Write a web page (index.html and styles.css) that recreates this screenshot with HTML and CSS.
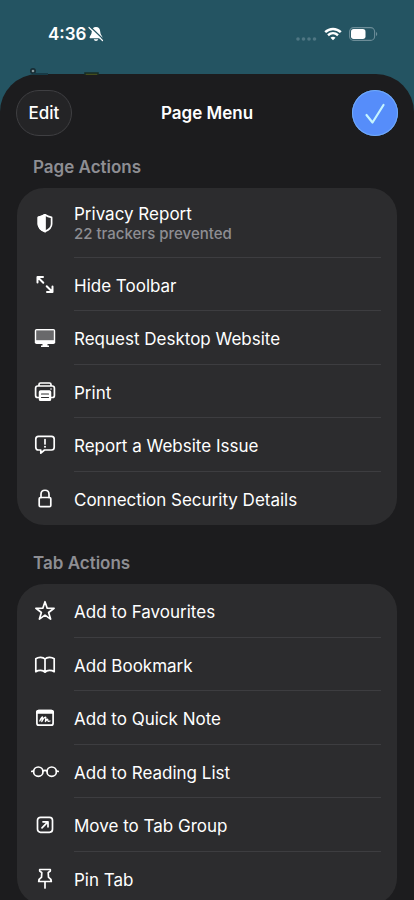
FILE: index.html
```html
<!DOCTYPE html>
<html lang="en-GB">
<head>
<meta charset="utf-8">
<meta name="viewport" content="width=device-width, initial-scale=1">
<title>Page Menu</title>
<link rel="stylesheet" href="styles.css">
</head>
<body>
<div class="screen">
  <div class="status">
    <div class="clock"><span>4:36</span>
      <svg width="16" height="16" viewBox="0 0 16 16"><path fill="#fff" d="M8 1C5.200 1 3.900 3 3.800 5.500C3.700 8.500 2 9.700 1.600 11.200C1.500 11.900 1.900 12.200 2.500 12.200H13.500C14.100 12.200 14.500 11.900 14.400 11.200C14 9.700 12.300 8.500 12.200 5.500C12.100 3 10.800 1 8 1ZM5.800 13.200C6.200 15.500 9.800 15.500 10.200 13.200Z"/><path d="M2.500 1L15.500 13.500" stroke="#245462" stroke-width="1.300"/><path d="M1 1.500L14.500 14.500" stroke="#fff" stroke-width="1.200" stroke-linecap="round"/></svg>
    </div>
    <div class="signals">
      <svg width="22" height="14" viewBox="0 0 22 14" fill="#4f7683"><circle cx="3" cy="12" r="1.800"/><circle cx="8.500" cy="12" r="1.800"/><circle cx="14" cy="12" r="1.800"/><circle cx="19.500" cy="12" r="1.800"/></svg>
      <svg width="18" height="14" viewBox="0 0 18 14" fill="none" stroke="#fff" stroke-width="2.500"><path d="M1.200 5.200C5.700 .9 12.300 .9 16.800 5.200M4 8.200C7 5.600 11 5.600 14 8.200"/><path d="M9 13.300L6.500 10.800C8 9.500 10 9.500 11.500 10.800Z" fill="#fff" stroke="none"/></svg>
      <svg width="29" height="14" viewBox="0 0 29 14"><rect x=".6" y=".6" width="25" height="12.800" rx="4" fill="none" stroke="#6c8d98" stroke-width="1.100"/><rect x="2" y="2" width="14.500" height="10" rx="2.700" fill="#fff"/><path d="M27 5V9C28.700 8.300 28.700 5.700 27 5Z" fill="#6c8d98"/></svg>
    </div>
  </div>
  <svg class="behind" width="72" height="8" viewBox="0 0 72 8"><circle cx="4" cy="4" r="3" fill="#172c34"/><circle cx="4" cy="4" r="1.300" fill="#87979b"/><path d="M4 7H19" stroke="#173a46" stroke-width="2"/><path d="M56 8V6H69V8" fill="#454d1c" stroke="#172c25" stroke-width="1.500"/></svg>
  <main class="sheet">
    <header class="bar">
      <button class="edit" type="button">Edit</button>
      <h1>Page Menu</h1>
      <button class="done" type="button" aria-label="Done"><svg width="46" height="46" viewBox="0 0 46 46" fill="none" stroke="#c5f4ff" stroke-width="2.200" stroke-linecap="round" stroke-linejoin="round"><path d="M14.500 25L20.500 32.500L31.500 15"/></svg></button>
    </header>

    <h2>Page Actions</h2>
    <ul class="card">
      <li class="tall"><button type="button">
        <svg class="icon" viewBox="0 0 28 28"><path d="M14 5.800C12 7.300 9.800 8.100 7.400 8.400V15C7.400 18.700 10.500 21 14 22.600C17.500 21 20.600 18.700 20.600 15V8.400C18.200 8.100 16 7.300 14 5.800Z"/><path class="solid" d="M14 5.800C12 7.300 9.800 8.100 7.400 8.400V15C7.400 18.700 10.500 21 14 22.600Z"/></svg>
        <span class="label">Privacy Report<small>22 trackers prevented</small></span></button></li>
      <li><button type="button">
        <svg class="icon" viewBox="0 0 28 28"><path d="M6.500 11.500V6H12M6.500 6L12.300 11.800M15.700 15.200L21.500 21M21.500 15.500V21H16" stroke-width="2"/></svg>
        <span class="label">Hide Toolbar</span></button></li>
      <li><button type="button">
        <svg class="icon" viewBox="0 0 28 28"><rect class="solid" x="3.800" y="5" width="20.400" height="15" rx="1.800" stroke="none"/><rect x="5.200" y="6.400" width="17.600" height="9.800" fill="#69696b" stroke="none"/><path class="solid" d="M11.500 19H16.500V21.500H18V23H10V21.500H11.500Z" stroke="none"/></svg>
        <span class="label">Request Desktop Website</span></button></li>
      <li><button type="button">
        <svg class="icon" viewBox="0 0 28 28"><path d="M8 8V6.500Q8 5 9.500 5H18.500Q20 5 20 6.500V8M8.500 19.500H6.500Q4.600 19.500 4.600 17.500V10.200Q4.600 8 6.800 8H21.200Q23.400 8 23.400 10.200V17.500Q23.400 19.500 21.500 19.500H19.500"/><rect class="solid" x="8.600" y="13" width="10.800" height="9.200" rx="1"/><path d="M10.500 16H17.500M10.500 19.500H17.500" stroke="#2c2c2e" stroke-width="1.200"/><circle class="solid" cx="20" cy="11" r=".8" stroke="none"/></svg>
        <span class="label">Print</span></button></li>
      <li><button type="button">
        <svg class="icon" viewBox="0 0 28 28"><path d="M7.500 5.400H20.500Q23.200 5.400 23.200 8.100V16.300Q23.200 19 20.500 19H13.500L9.800 22.200V19H7.500Q4.800 19 4.800 16.300V8.100Q4.800 5.400 7.500 5.400Z"/><path d="M14 8.500V13"/><circle class="solid" cx="14" cy="15.700" r="1" stroke="none"/></svg>
        <span class="label">Report a Website Issue</span></button></li>
      <li><button type="button">
        <svg class="icon" viewBox="0 0 28 28"><rect x="8.200" y="12.500" width="11.600" height="9.200" rx="1.300"/><path d="M10 12.500V9.300C10 3.900 18 3.900 18 9.300V12.500"/></svg>
        <span class="label">Connection Security Details</span></button></li>
    </ul>

    <h2>Tab Actions</h2>
    <ul class="card">
      <li><button type="button">
        <svg class="icon" viewBox="0 0 28 28"><path d="M14 4.700L16.200 11.200L23.100 11.300L17.600 15.500L19.600 22.100L14 18.100L8.400 22.100L10.400 15.500L4.900 11.300L11.800 11.200Z"/></svg>
        <span class="label">Add to Favourites</span></button></li>
      <li><button type="button">
        <svg class="icon" viewBox="0 0 28 28"><path d="M14 8C12 5.900 7.500 5.700 4.800 7.700V20.700C7.500 18.900 12 18.900 14 21.200C16 18.900 20.500 18.900 23.200 20.700V7.700C20.500 5.700 16 5.900 14 8V21.200"/></svg>
        <span class="label">Add Bookmark</span></button></li>
      <li><button type="button">
        <svg class="icon" viewBox="0 0 28 28"><rect x="5.900" y="6.500" width="16.200" height="14.700" rx="2"/><path class="solid" d="M5.900 9V8.200Q5.900 6.500 7.600 6.500H20.400Q22.100 6.500 22.100 8.200V9Z"/><path d="M8.800 17C10 14 11.800 11.800 11.600 13.700L10.800 17.500C12.500 14 15.300 11.500 14.800 14.300L14.400 17.500C15.800 15.300 17 14.500 16.800 16.200C16.800 17.700 18 17.500 19 17" stroke-width="1.300"/></svg>
        <span class="label">Add to Quick Note</span></button></li>
      <li><button type="button">
        <svg class="icon" viewBox="0 0 28 28"><circle cx="7.300" cy="13.700" r="4.700"/><circle cx="20.700" cy="13.700" r="4.700"/><path d="M.8 13.400L2.600 13M12 13C13.300 12.200 14.700 12.200 16 13M25.400 13L27.200 13.400"/></svg>
        <span class="label">Add to Reading List</span></button></li>
      <li><button type="button">
        <svg class="icon" viewBox="0 0 28 28"><rect x="6.500" y="6.300" width="15" height="15" rx="3"/><path d="M11 16.800L16.600 11.200M12 10.800H17V15.800"/></svg>
        <span class="label">Move to Tab Group</span></button></li>
      <li><button type="button">
        <svg class="icon" viewBox="0 0 28 28"><path d="M8.700 4.500H19.300V6L17.200 7.700L17.500 12.300C19.300 13.300 20.200 14.400 20.300 16.500H7.700C7.800 14.400 8.700 13.300 10.500 12.300L10.800 7.700L8.700 6ZM14 16.500V23"/></svg>
        <span class="label">Pin Tab</span></button></li>
    </ul>
  </main>
</div>
</body>
</html>
```
FILE: styles.css
```css
* { box-sizing: border-box; }

body {
  margin: 0;
  background: #245462;
  color: #fff;
  font-family: Inter, "Liberation Sans", sans-serif;
}

button {
  font: inherit;
  color: inherit;
  border: 0;
  padding: 0;
  cursor: pointer;
}

svg { display: block; flex: none; }

.screen {
  position: relative;
  display: flex;
  flex-direction: column;
  height: 100vh;
  overflow: hidden;
}

.status {
  flex: none;
  display: flex;
  justify-content: space-between;
  align-items: center;
  height: 74px;
  padding: 0 36px 7px 48px;
}

.clock {
  display: flex;
  align-items: center;
  gap: 2px;
  font-size: 17px;
  font-weight: 600;
}

.signals {
  display: flex;
  align-items: center;
  gap: 7px;
}

.behind {
  position: absolute;
  left: 29px;
  top: 67px;
}

.sheet {
  flex: 1;
  min-height: 0;
  padding: 16px;
  border-radius: 38px 38px 0 0;
  background: #1c1c1e;
  overflow-y: auto;
  scrollbar-width: none;
}

.bar {
  display: grid;
  grid-template-columns: 56px 1fr 56px;
  align-items: center;
  height: 46px;
}

.bar h1 {
  margin: 0;
  font-size: 17px;
  font-weight: 600;
  text-align: center;
}

.edit {
  height: 46px;
  border: 1px solid #3f3f42;
  border-radius: 23px;
  background: #242426;
  font-size: 17px;
  font-weight: 500;
}

.done {
  justify-self: end;
  width: 46px;
  height: 46px;
  border-radius: 50%;
  background: #568dfa;
  box-shadow: inset 0 0 0 1px #70aaf8;
}

h2 {
  margin: 0;
  padding: 0 17px;
  color: #8e8e93;
  font-size: 17px;
  font-weight: 600;
  line-height: 20px;
}

.bar + h2 { padding-top: 21px; }
.card + h2 { padding-top: 28px; }

.card {
  margin: 11px 1px 0;
  padding: 0;
  list-style: none;
  border-radius: 27px;
  background: #2c2c2e;
}

.card button {
  display: flex;
  align-items: stretch;
  gap: 15px;
  width: 100%;
  height: 54px;
  padding: 0 16px 0 14px;
  background: none;
  text-align: left;
}

.card li:nth-child(even) button { height: 53px; }
.card .tall button { height: 70px; }

.icon {
  align-self: center;
  width: 28px;
  height: 28px;
  fill: none;
  stroke: #fff;
  stroke-width: 1.7px;
  stroke-linecap: round;
  stroke-linejoin: round;
}

.icon .solid { fill: #fff; }

.label {
  flex: 1;
  display: flex;
  flex-direction: column;
  justify-content: center;
  padding-top: 3px;
  border-bottom: 1px solid #3d3d40;
  font-size: 17px;
  line-height: 20px;
}

.card li:last-child .label { border-bottom-color: transparent; }

.label small {
  color: #8e8e93;
  font-size: 15px;
  font-weight: 500;
  line-height: 20px;
}
```
